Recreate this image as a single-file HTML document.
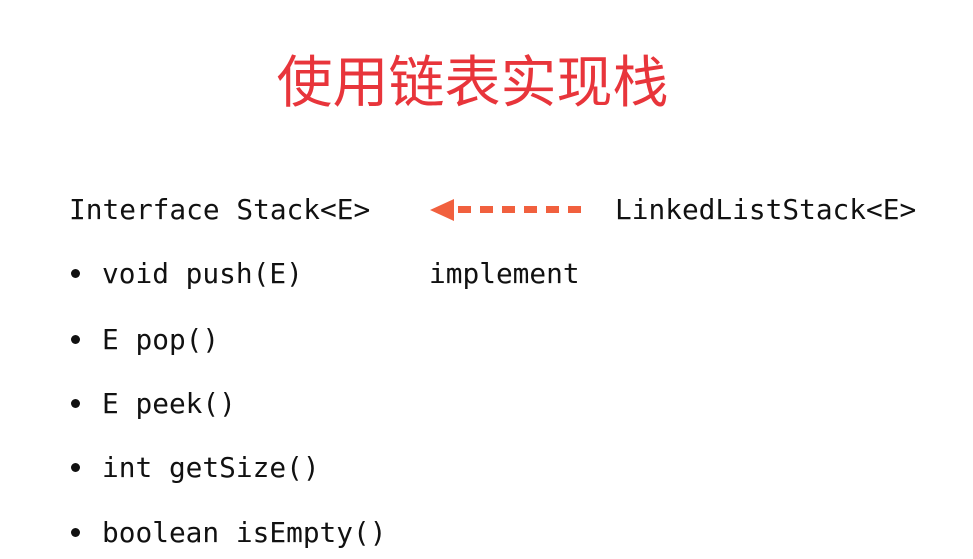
<html><head><style>
body{margin:0;width:973px;height:559px;background:#fff;position:relative;overflow:hidden;font-family:"DejaVu Sans Mono","Liberation Mono",monospace;color:#111}
.t{position:absolute;font-size:27.8px;line-height:1;white-space:pre}
.h{position:absolute;left:0;width:945px;text-align:center;top:55px;font-family:"Liberation Sans","Noto Sans CJK SC",sans-serif;font-size:56px;color:#e8353b;line-height:1}
.b{position:absolute;left:71px;width:9px;height:9px;border-radius:50%;background:#111}
</style></head><body>
<div class="h">使用链表实现栈</div>
<div class="t" style="left:69px;top:196px">Interface Stack&lt;E&gt;</div>
<div class="t" style="left:615px;top:196px">LinkedListStack&lt;E&gt;</div>
<div class="t" style="left:429px;top:260px">implement</div>
<svg style="position:absolute;left:428px;top:198px" width="165" height="24">
<polygon points="2,12 26,1 26,23" fill="#f1603e"/>
<g fill="#f1603e"><rect x="30" y="8" width="13" height="7"/><rect x="52" y="8" width="13" height="7"/><rect x="74" y="8" width="13" height="7"/><rect x="96" y="8" width="13" height="7"/><rect x="118" y="8" width="13" height="7"/><rect x="140" y="8" width="13" height="7"/></g>
</svg>
<div class="b" style="top:269px"></div><div class="t" style="left:102px;top:260px">void push(E)</div>
<div class="b" style="top:335px"></div><div class="t" style="left:102px;top:326px">E pop()</div>
<div class="b" style="top:399px"></div><div class="t" style="left:102px;top:390px">E peek()</div>
<div class="b" style="top:463px"></div><div class="t" style="left:102px;top:454px">int getSize()</div>
<div class="b" style="top:528px"></div><div class="t" style="left:102px;top:519px">boolean isEmpty()</div>
</body></html>
